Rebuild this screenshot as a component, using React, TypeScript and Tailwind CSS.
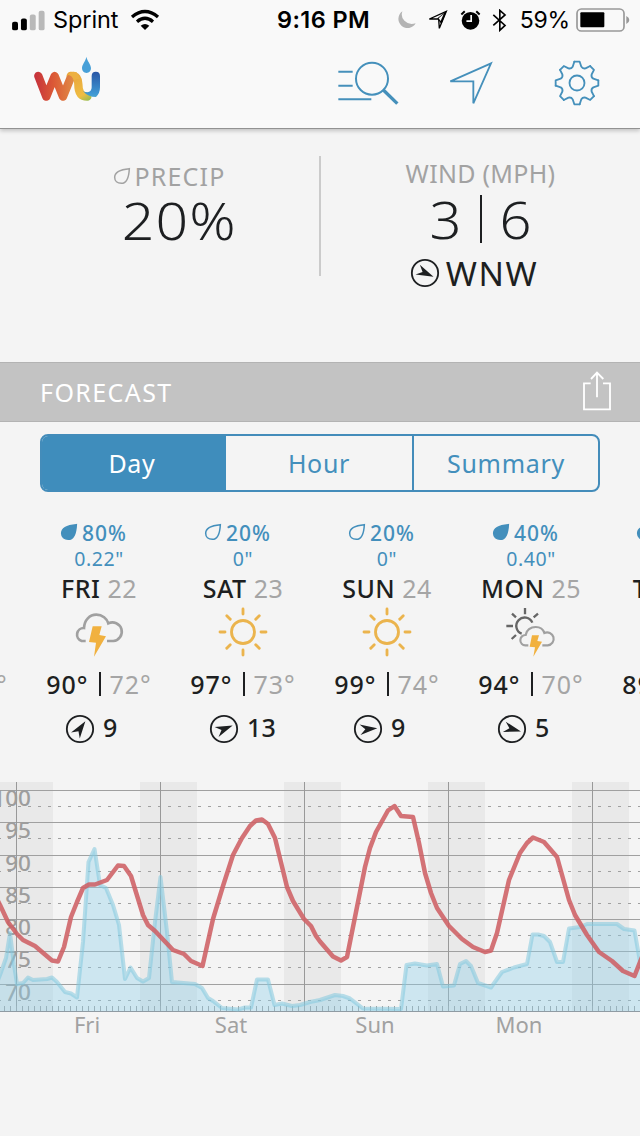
import React from 'react';

type Condition = 'storm' | 'sun' | 'sunStorm';

interface DayForecast {
  day: string;
  date: string;
  precip: number;
  amount: string;
  condition: Condition;
  high: number;
  low: number;
  wind: number;
  windAngle: number;
}

const DAYS: DayForecast[] = [
  { day: 'THU', date: '21', precip: 20, amount: '0"', condition: 'sun', high: 91, low: 73, wind: 8, windAngle: -40 },
  { day: 'FRI', date: '22', precip: 80, amount: '0.22"', condition: 'storm', high: 90, low: 72, wind: 9, windAngle: -55 },
  { day: 'SAT', date: '23', precip: 20, amount: '0"', condition: 'sun', high: 97, low: 73, wind: 13, windAngle: -22 },
  { day: 'SUN', date: '24', precip: 20, amount: '0"', condition: 'sun', high: 99, low: 74, wind: 9, windAngle: -5 },
  { day: 'MON', date: '25', precip: 40, amount: '0.40"', condition: 'sunStorm', high: 94, low: 70, wind: 5, windAngle: 16 },
  { day: 'TUE', date: '26', precip: 50, amount: '0.30"', condition: 'storm', high: 89, low: 70, wind: 6, windAngle: 10 },
];

const TEMPERATURE =
  '-4,897 0,905 8,922 17,934 23,940 35,946 52,960.5 58,961.5 64,947 71,917 77,902 83,888 89,884.5 95,884.5 107,880 118,865.5 124,866 131,876 143,915 148,925 155,931 173,950 184,954 191,961 202.5,966 213,919 223,886 233,855 242,838 250,826 256,820.5 262,819.5 268,824 275,838 287,887 293,901 304,919 311,926 316,936 320,941.5 333,956.5 341,960.5 347,957 352,932 358,902 365,867 370,848 376,832 388,810.5 394.5,806 401,816 413,817 419,843 425,873 431,893 437,908 449,926 462,939 473,947 485,952 491,950.5 497,933 509,880 520,853 527,843 533,837.5 544,842 557,857 569,900 575,915 587,935 599,952 612,961 623,971 634.5,976 640,962 644,952';

const PRECIPITATION =
  '-4,985 0,975 6,958 10,933 14,965 17,984 23,983 28,977.5 33,980 47,979 52,977.5 57,982 65,992 71,993.5 77,997.5 83,942 88.5,862 94.5,849 100,885 106,888 113,905 119,925 125,979 130.5,967.5 137,978 143,981.5 149,978 155,922 160.5,877 167,932 172,982 195,984 202,988 208,998 213,1001 222,1008 238,1009.5 245,1007.5 251,1007.5 257,979.5 268,979.5 274.5,1005 282,1003.5 292,1006 300,1005 310,1002 320,1000 335,995 343,996 350,998.5 363,1008.5 401,1009 406.5,965 415,963.5 427,965.5 437,964 443,986.5 454,985.5 460,964 466,961 471,966 478,983 491,987.5 502,972 514,967.5 527,964 532.5,934.5 538,934.5 544,936 550,942 557,962 563,962 569,928.5 580,927 587,924 617,924 624,929 634.5,930.5 640,962 644,975';

const GRID = [100, 95, 90, 85, 80, 75, 70].map((value, i) => ({ value, y: 790.5 + i * 32.25 }));
const MIDNIGHTS = [16.5, 160.5, 304.5, 448.5, 592.5];
const TICKS = Array.from({ length: 107 }, (_, i) => 4.5 + i * 6);
const AXIS_DAYS = [
  { label: 'Fri', x: 87 },
  { label: 'Sat', x: 231 },
  { label: 'Sun', x: 375 },
  { label: 'Mon', x: 519 },
];

const Logo = () => (
  <svg viewBox="99 165 207 144" className="w-[69px] h-12">
    <defs>
      <linearGradient id="wuWarm" gradientUnits="userSpaceOnUse" x1="103" y1="0" x2="220" y2="0">
        <stop offset="0" stopColor="#c5313c" />
        <stop offset="0.5" stopColor="#dc5a36" />
        <stop offset="1" stopColor="#e08a45" />
      </linearGradient>
      <linearGradient id="wuCool" gradientUnits="userSpaceOnUse" x1="0" y1="215" x2="0" y2="303">
        <stop offset="0" stopColor="#2a56a5" />
        <stop offset="0.75" stopColor="#3f98d3" />
        <stop offset="1" stopColor="#58b3c9" />
      </linearGradient>
      <linearGradient id="wuSunny" gradientUnits="userSpaceOnUse" x1="225" y1="225" x2="270" y2="303">
        <stop offset="0" stopColor="#e9a63c" />
        <stop offset="0.7" stopColor="#efbd43" />
        <stop offset="1" stopColor="#8dbd51" />
      </linearGradient>
    </defs>
    <g fill="none" strokeWidth="25" strokeLinecap="round" strokeLinejoin="round">
      <path d="M212 228C230 226 235 238 235 252C235 277 243 290 262 290" stroke="url(#wuSunny)" />
      <path d="M115 228L139 290L164 228L189 290L211 236" stroke="url(#wuWarm)" />
    </g>
    <path d="M203 224Q219 227 221 243Q228 236 240 236L230 217Q213 212 203 224Z" fill="#edb041" />
    <path d="M275 228Q275 215 287.500 215Q300 215 300 228V262Q300 280 288 291Q264 291 248 272Q253 277 262 277Q275 276 275 262Z" fill="url(#wuCool)" />
    <path d="M259 170C257 184 246 193 246 205C246 213 251 219 259.500 219C268 219 273 213 273 205C273 193 262 184 259 170Z" fill="#48a0d8" />
  </svg>
);

const StatusBar = () => (
  <div className="flex h-10 items-center pl-3 pr-[10px] font-['Inter',sans-serif] text-black">
    <div className="flex w-[265px] items-center">
      <svg viewBox="36 28 100 64" className="mr-2 h-[21px] w-[33px]">
        <rect x="36" y="64" width="18" height="26" rx="6" />
        <rect x="63" y="54" width="18" height="36" rx="6" />
        <rect x="90" y="42" width="18" height="48" rx="6" fill="#b9b9b9" />
        <rect x="117" y="30" width="18" height="60" rx="6" fill="#b9b9b9" />
      </svg>
      <span className="text-[23.500px] leading-10 tracking-[-0.1px]">Sprint</span>
      <svg viewBox="390 27 90 66" className="ml-3 h-[22px] w-[30px]">
        <g fill="none" stroke="#000" strokeWidth="10">
          <path d="M396 51Q435 18 474 51" />
          <path d="M411 65Q435 45 459 65" />
        </g>
        <path d="M422 77Q435 67 448 77L435 90Z" />
      </svg>
    </div>
    <span className="text-[23.500px] font-semibold leading-10 tracking-[0.4px]">9:16 PM</span>
    <div className="ml-auto flex items-center">
      <svg viewBox="232 33 56 56" className="mr-3 h-[19px] w-[19px]">
        <path d="M248 34A27 27 0 1 0 287 69Q268 76 254 62Q242 49 248 34Z" fill="#b4b4b4" />
      </svg>
      <svg viewBox="326 32 60 60" className="mr-3 h-5 w-5">
        <path d="M381 36L330 59H358L360 87Z" fill="none" stroke="#000" strokeWidth="4" />
        <path d="M382 35L354 57L366 75Z" />
        <path d="M373 44L358 57L364 65Z" fill="#f9f9f9" />
      </svg>
      <svg viewBox="420 30 62 62" className="mr-[11px] h-[21px] w-[21px]">
        <circle cx="451" cy="62" r="26" />
        <path d="M424 43L434 34M478 43L468 34" stroke="#000" strokeWidth="6" />
        <path d="M453 45V63H439" fill="none" stroke="#f9f9f9" strokeWidth="5" />
      </svg>
      <svg viewBox="514 26 46 70" className="mr-[13px] h-[23px] w-[15px]">
        <path d="M518 44L554 76L538 91V30L554 44L518 76" fill="none" stroke="#000" strokeWidth="5" />
      </svg>
      <span className="mr-[6px] text-[23px] leading-10 tracking-[-0.2px]">59%</span>
      <svg viewBox="767 26 162 72" className="h-6 w-[54px]">
        <rect x="770" y="29" width="141" height="66" rx="13" fill="none" stroke="#999" strokeWidth="5" />
        <rect x="780" y="39" width="72" height="45" rx="3" />
        <path d="M918 50Q927 54 927 62Q927 70 918 74Z" fill="#999" />
      </svg>
    </div>
  </div>
);

const SearchIcon = () => (
  <svg viewBox="50 180 189 141" className="h-[47px] w-[63px]" fill="none" stroke="#4590bb">
    <path d="M54 215H97M54 257H97M54 298H153" strokeWidth="6" />
    <circle cx="155" cy="236" r="48" strokeWidth="6" />
    <path d="M189 270L231 311" strokeWidth="10" />
  </svg>
);

const NavIcon = () => (
  <svg viewBox="385 180 141 141" className="h-[47px] w-[47px]" fill="none" stroke="#4590bb" strokeWidth="5.500">
    <path d="M514 190L392 244H461V310Z" />
  </svg>
);

const GearIcon = () => (
  <svg viewBox="-72 -69 144 141" className="h-[47px] w-12" fill="none" stroke="#4590bb" strokeWidth="5.500" strokeLinecap="round" strokeLinejoin="round">
    <circle r="22.500" />
    {[0, 45, 90, 135, 180, 225, 270, 315].map(angle => (
      <path key={angle} transform={`rotate(${angle})`} d="M-8 -64L8 -64L13 -49Q17 -42 25.500 -43.800L39.600 -50.900" />
    ))}
  </svg>
);

const DropIcon = ({ filled, color, className }: { filled: boolean; color: string; className: string }) => (
  <svg viewBox="180 27 54 54" className={className}>
    <path
      d="M229 32C207 34 185 41 185 58C185 69 193 76 205 76C225 76 228 52 229 32Z"
      fill={filled ? color : 'none'}
      stroke={color}
      strokeWidth="4.500"
    />
  </svg>
);

const WindIcon = ({ angle, className }: { angle: number; className: string }) => (
  <svg viewBox="-45 -45 90 90" className={className}>
    <circle r="39.500" fill="none" stroke="#1d1f21" strokeWidth="5.500" />
    <path transform={`rotate(${angle})`} d="M28 0L-24 -16L-8 0L-24 16Z" fill="#1d1f21" />
  </svg>
);

const SunIcon = () => (
  <svg viewBox="-78 -78 156 156" className="h-[52px] w-[52px]" fill="none" stroke="#ebb44d" strokeWidth="8.500" strokeLinecap="round">
    <circle r="34.500" />
    {[0, 45, 90, 135, 180, 225, 270, 315].map(angle => (
      <path key={angle} transform={`rotate(${angle})`} d="M0 -54V-69" />
    ))}
  </svg>
);

const StormIcon = () => (
  <svg viewBox="220 272 156 156" className="h-[52px] w-[52px]">
    <path
      d="M258 377H246A20 20 0 0 1 253 338C254 314 270 298 290 298C308 298 322 310 326 324A28 28 0 1 1 341 377H322"
      fill="none"
      stroke="#a0a0a0"
      strokeWidth="8"
    />
    <path d="M279 333H306L299 359L319 363L283 424L289 382L268 380Z" fill="#f1b13f" />
  </svg>
);

const SunStormIcon = () => (
  <svg viewBox="555 272 156 156" className="h-[52px] w-[52px]" fill="none">
    <g stroke="#666" strokeWidth="7">
      <path d="M637 322A25 25 0 1 0 605 355" />
      <path d="M615 278V297M576 295L588 306M559 332H579M575 371L588 359M654 295L641 306" />
    </g>
    <path
      d="M625 390H616A15 15 0 0 1 617 359C619 344 632 335 647 335C660 335 670 343 673 353A19.500 19.500 0 1 1 683 390H667"
      stroke="#a0a0a0"
      strokeWidth="6.500"
    />
    <path d="M636 360H657L652 377L666 379L640 424L645 396L629 394Z" fill="#f1b13f" />
  </svg>
);

const ConditionIcon = ({ condition }: { condition: Condition }) => {
  if (condition === 'sun') return <SunIcon />;
  if (condition === 'sunStorm') return <SunStormIcon />;
  return <StormIcon />;
};

const DayColumn = ({ item }: { item: DayForecast }) => (
  <div className="flex w-36 shrink-0 flex-col items-center text-[#1d1f21]">
    <div className="flex h-[26px] items-center pr-[11px] text-[21px] font-medium leading-[26px] tracking-[1px] text-[#438fbc]">
      <DropIcon filled={item.precip >= 40} color="#438fbc" className="mb-[2px] mr-1 h-[18px] w-[18px]" />
      {item.precip}%
    </div>
    <div className="text-[19.500px] leading-[26px] tracking-[0.6px] text-[#438fbc]">{item.amount}</div>
    <div className="text-[25px] font-medium leading-8 tracking-[0.5px]">
      {item.day} <span className="font-normal text-[#a5a5a5]">{item.date}</span>
    </div>
    <div className="mt-[2px]">
      <ConditionIcon condition={item.condition} />
    </div>
    <div className="mt-[10px] flex items-center text-[25px] font-medium leading-8 tracking-[1px]">
      {item.high}°
      <span className="ml-[11px] mr-2 h-6 w-[2px] bg-[#1d1f21]" />
      <span className="font-normal text-[#a5a5a5]">{item.low}°</span>
    </div>
    <div className="mt-[11px] flex self-start pl-[38px] text-[25px] font-medium leading-8 tracking-[0.3px]">
      <WindIcon angle={item.windAngle} className="mr-2 mt-[3px] h-[30px] w-[30px]" />
      {item.wind}
    </div>
  </div>
);

const Chart = () => (
  <svg viewBox="0 782 640 260" className="block h-[260px] w-full font-['Noto_Sans',sans-serif]">
    {MIDNIGHTS.map(x => (
      <rect key={x} x={x - 20.5} y="782" width="57" height="229" fill="#e9e9e9" />
    ))}
    {GRID.map(({ value, y }) => (
      <g key={value}>
        <path d={`M0 ${Math.floor(y) + 0.5}H640`} stroke="#a0a0a0" />
        <path d={`M-2 ${Math.floor(y + 16) + 0.5}H640`} stroke="#a0a0a0" strokeDasharray="3 7" />
      </g>
    ))}
    {MIDNIGHTS.map(x => (
      <path key={x} d={`M${x} 782V1011`} stroke="#999" />
    ))}
    {TICKS.map(x => (
      <path key={x} d={`M${x} 1006V1011`} stroke="#a0a0a0" />
    ))}
    <path d="M0 1011.500H640" stroke="#8f9ba3" />
    <g className="fill-[#9d9d9d] text-[22.500px] font-medium" textAnchor="end">
      {GRID.map(({ value, y }) => (
        <text key={value} x="31" y={y + 15.5}>{value}</text>
      ))}
    </g>
    <polygon points={`-4,1011 ${PRECIPITATION} 644,1011`} fill="#8fcfea" fillOpacity="0.38" />
    <polyline points={PRECIPITATION} fill="none" stroke="#83c8df" strokeOpacity="0.55" strokeWidth="4" strokeLinejoin="round" />
    <polyline points={TEMPERATURE} fill="none" stroke="#ce6064" strokeOpacity="0.88" strokeWidth="4.500" strokeLinejoin="round" />
    <g className="fill-[#a1a1a1] text-[22px]" textAnchor="middle">
      {AXIS_DAYS.map(({ label, x }) => (
        <text key={label} x={x} y="1033">{label}</text>
      ))}
    </g>
  </svg>
);

export default function App() {
  return (
    <div className="h-[1136px] w-[640px] overflow-hidden bg-[#f4f4f4] font-['Noto_Sans',sans-serif] text-[#1d1f21]">
      <header className="relative h-[129px] border-b border-[#929292] bg-[#f9f9f9] shadow-[0_2px_4px_rgba(0,0,0,0.2)]">
        <StatusBar />
        <div className="flex pl-[33px] pr-[39px] pt-[15px]">
          <Logo />
          <div className="ml-auto mt-[5px] flex">
            <SearchIcon />
            <div className="ml-12 mr-[58px]"><NavIcon /></div>
            <GearIcon />
          </div>
        </div>
      </header>

      {/* Current conditions */}
      <section className="flex h-[233px]">
        <div className="flex w-[319px] flex-col items-center pt-[33px]">
          <div className="flex items-center pl-5 text-[25px] leading-7 tracking-[1.200px] text-[#a2a2a2]">
            <DropIcon filled={false} color="#a2a2a2" className="mr-[3px] h-[18px] w-[18px]" />
            <span>PRECIP</span>
          </div>
          <div className="mt-1 pl-[39px]">
            <div className="scale-x-[1.120] text-[51px] font-light leading-[52px] tracking-[1px]">20%</div>
          </div>
        </div>
        <div className="mt-[27px] h-[120px] w-[2px] bg-[#cbcbcb]" />
        <div className="flex flex-1 flex-col items-center pt-[30px]">
          <div className="text-[25px] leading-7 tracking-[0.3px] text-[#a2a2a2]">WIND (MPH)</div>
          <div className="mt-[6px] flex items-center text-[51px] font-light leading-[52px]">
            <span className="scale-x-110">3</span>
            <span className="mx-[19px] h-12 w-[2px] bg-[#1d1f21]" />
            <span className="scale-x-110">6</span>
          </div>
          <div className="mt-2 flex items-center pr-[13px] text-[33.500px] leading-10 tracking-[1.500px]">
            <WindIcon angle={24} className="mr-[6px] h-[30px] w-[30px]" />
            WNW
          </div>
        </div>
      </section>

      <div className="flex h-[60px] items-center justify-between border-y border-[#b3b3b3] bg-[#c3c3c3] pl-10 pr-7">
        <h2 className="text-[25px] leading-8 tracking-[1.400px] text-white">FORECAST</h2>
        <svg viewBox="786 44 90 126" className="mb-[2px] h-[42px] w-[30px]" fill="none" stroke="#fff" strokeWidth="5.500">
          <path d="M812 84H792V162H870V84H849M831 126V51M813 71L831 52L850 71" />
        </svg>
      </div>

      <div className="mx-10 mt-3 flex h-[58px] overflow-hidden rounded-lg border-2 border-[#438cba] text-[25px] tracking-[0.700px] text-[#438fbc]">
        <button className="w-[184px] bg-[#3f8dbc] pr-1 pt-[2px] text-white">Day</button>
        <button className="w-[188px] border-r-2 border-[#438cba] pt-[2px]">Hour</button>
        <button className="flex-1 pt-[2px]">Summary</button>
      </div>

      <div className="overflow-hidden">
        <div className="-ml-[117px] flex pt-7">
          {DAYS.map(item => (
            <DayColumn key={item.day} item={item} />
          ))}
        </div>
      </div>

      <div className="mt-[38px]">
        <Chart />
      </div>
    </div>
  );
}
